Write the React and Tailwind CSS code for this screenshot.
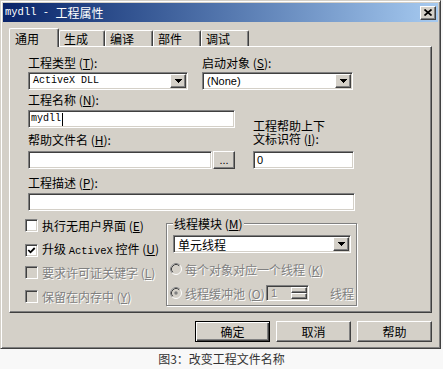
import React from "react";

const SUNKEN =
  "border border-t-[#808080] border-l-[#808080] border-b-white border-r-white shadow-[inset_1px_1px_0_#404040,inset_-1px_-1px_0_#d4d0c8]";
const RAISED =
  "border border-t-white border-l-white border-b-[#404040] border-r-[#404040] shadow-[inset_-1px_-1px_0_#808080]";
const DIS = "text-[#808080] [text-shadow:1px_1px_0_#ffffff]";
const MONO = "[font-family:'Liberation_Mono','Noto_Sans_CJK_SC',monospace]";
const SANS = "[font-family:'Liberation_Sans','Noto_Sans_CJK_SC',sans-serif]";

function Acc({ k }) {
  return (
    <>
      {" "}(<span className="underline underline-offset-[1px]">{k}</span>)
    </>
  );
}

function Arrow({ color = "#000" }) {
  return (
    <svg width="7" height="4" viewBox="0 0 7 4" shapeRendering="crispEdges">
      <rect x="0" y="0" width="7" height="1" fill={color} />
      <rect x="1" y="1" width="5" height="1" fill={color} />
      <rect x="2" y="2" width="3" height="1" fill={color} />
      <rect x="3" y="3" width="1" height="1" fill={color} />
    </svg>
  );
}

function DropBtn() {
  return (
    <div className={`${RAISED} bg-[#d4d0c8] w-[16px] h-full flex items-center justify-center shrink-0`}>
      <Arrow />
    </div>
  );
}

function Check({ checked, disabled }) {
  return (
    <div
      className={`${SUNKEN} w-[13px] h-[13px] shrink-0 p-[1px] flex items-center justify-center ${
        disabled ? "bg-[#d4d0c8]" : "bg-white"
      }`}
    >
      {checked && (
        <svg width="9" height="9" viewBox="0 0 9 9">
          <path d="M1.3 4 L3.5 6.3 L7.7 2" fill="none" stroke="#000" strokeWidth="1.8" />
        </svg>
      )}
    </div>
  );
}

function Radio({ checked }) {
  return (
    <svg width="12" height="12" viewBox="0 0 12 12" className="shrink-0">
      <circle cx="6" cy="6" r="5.5" fill="#d4d0c8" stroke="#ffffff" strokeWidth="1" />
      <path d="M2.11 9.89 A5.5 5.5 0 0 1 9.89 2.11" fill="none" stroke="#808080" strokeWidth="1" />
      <path d="M2.82 9.18 A4.5 4.5 0 0 1 9.18 2.82" fill="none" stroke="#404040" strokeWidth="1" />
      {checked && <circle cx="6" cy="6" r="1.7" fill="#808080" />}
    </svg>
  );
}

function Label({ children, className = "" }) {
  return <div className={`h-[13px] leading-[13px] whitespace-nowrap ${className}`}>{children}</div>;
}

export default function App() {
  return (
    <div className="w-[443px] h-[369px] bg-[#f8f8f8] overflow-hidden text-[12px] text-black [font-family:'Noto_Sans_CJK_SC','Liberation_Sans',sans-serif]">
      <div className="w-[441px] h-[349px] bg-[#d4d0c8] border border-t-[#d4d0c8] border-l-[#d4d0c8] border-b-[#404040] border-r-[#404040] shadow-[inset_1px_1px_0_#ffffff,inset_-1px_-1px_0_#808080] p-[2px] flex flex-col">
        {/* title bar */}
        <div className="h-[19px] shrink-0 flex items-center bg-linear-to-r from-[#0a246a] to-[#a6caf0] pl-[2px] pr-[2px]">
          <span className={`text-white text-[10.5px] ${MONO} whitespace-pre`}>mydll - </span>
          <span className="text-white text-[12px] leading-[14px]">工程属性</span>
          <div className={`${RAISED} ml-auto w-[16px] h-[14px] bg-[#d4d0c8] flex items-center justify-center`}>
            <svg width="8" height="7" viewBox="0 0 8 7">
              <path d="M0.5 0.5 L7.5 6.5 M7.5 0.5 L0.5 6.5" stroke="#000" strokeWidth="1.7" />
            </svg>
          </div>
        </div>

        {/* tabs */}
        <div className="mt-[6px] ml-[6px] h-[18px] shrink-0 flex items-start relative z-10">
          <div className="w-[50px] h-[19px] bg-[#d4d0c8] border-l border-t border-r border-l-white border-t-white border-r-[#404040] shadow-[inset_-1px_0_0_#808080] rounded-t-[2px] pl-[5px] pt-[3px] leading-[13px]">
            通用
          </div>
          {[
            ["生成", "w-[46px]"],
            ["编译", "w-[48px]"],
            ["部件", "w-[48px]"],
            ["调试", "w-[48px]"],
          ].map(([t, w]) => (
            <div
              key={t}
              className={`${w} h-[16px] mt-[2px] bg-[#d4d0c8] border-l border-t border-r border-l-white border-t-white border-r-[#404040] shadow-[inset_-1px_0_0_#808080] rounded-t-[2px] pl-[4px] pt-[1px] leading-[13px]`}
            >
              {t}
            </div>
          ))}
        </div>

        {/* panel */}
        <div className="ml-[6px] w-[423px] h-[267px] shrink-0 border border-t-white border-l-white border-b-[#404040] border-r-[#404040] shadow-[inset_-1px_-1px_0_#808080] pt-[9px] pl-[18px]">
          {/* row 1 */}
          <div className="flex">
            <div className="w-[174px]">
              <Label>
                工程类型<Acc k="T" />:
              </Label>
              <div className={`${SUNKEN} mt-[3px] w-[160px] h-[18px] bg-white p-[1px] flex items-center`}>
                <div className={`flex-1 pl-[3px] text-[10px] ${MONO} leading-[12px]`}>ActiveX DLL</div>
                <DropBtn />
              </div>
            </div>
            <div>
              <Label>
                启动对象<Acc k="S" />:
              </Label>
              <div className={`${SUNKEN} mt-[3px] w-[151px] h-[18px] bg-white p-[1px] flex items-center`}>
                <div className={`flex-1 pl-[3px] text-[11px] ${SANS} leading-[12px]`}>(None)</div>
                <DropBtn />
              </div>
            </div>
          </div>

          {/* row 2 */}
          <div className="flex mt-[3px]">
            <div className="w-[207px]">
              <Label>
                工程名称<Acc k="N" />:
              </Label>
              <div className={`${SUNKEN} mt-[4px] h-[18px] bg-white pl-[2px] flex items-center`}>
                <span className={`text-[10px] ${MONO} leading-[12px]`}>mydll</span>
                <span className="ml-[1px] w-[1px] h-[13px] bg-black" />
              </div>
              <Label className="mt-[5px]">
                帮助文件名<Acc k="H" />:
              </Label>
              <div className="mt-[5px] flex gap-[1px]">
                <div className={`${SUNKEN} w-[184px] h-[18px] bg-white`} />
                <div className={`${RAISED} w-[22px] h-[18px] bg-[#d4d0c8] flex items-end justify-center pb-[2px] ${SANS} text-[11px] leading-[11px]`}>
                  ...
                </div>
              </div>
            </div>
            <div className="ml-[18px] pt-[26px]">
              <Label>工程帮助上下</Label>
              <Label>
                文标识符<Acc k="I" />:
              </Label>
              <div className={`${SUNKEN} mt-[6px] w-[101px] h-[18px] bg-white pl-[3px] flex items-center ${SANS} text-[11px]`}>
                0
              </div>
            </div>
          </div>

          {/* row 3 */}
          <Label className="mt-[7px]">
            工程描述<Acc k="P" />:
          </Label>
          <div className={`${SUNKEN} mt-[4px] w-[327px] h-[18px] bg-white`} />

          {/* row 4 */}
          <div className="flex items-start">
            <div className="ml-[-3px] w-[141px]">
              <div className="mt-[7px] h-[14px] flex items-center gap-[4px]">
                <Check />
                <span className="whitespace-nowrap leading-[13px]">
                  执行无用户界面<Acc k="E" />
                </span>
              </div>
              <div className="mt-[11px] h-[14px] flex items-center gap-[4px]">
                <Check checked />
                <span className="whitespace-nowrap leading-[13px]">
                  升级 <span className={`${MONO} text-[10.5px]`}>ActiveX</span> 控件<Acc k="U" />
                </span>
              </div>
              <div className="mt-[8px] h-[14px] flex items-center gap-[4px]">
                <Check disabled />
                <span className={`whitespace-nowrap leading-[13px] ${DIS}`}>
                  要求许可证关键字<Acc k="L" />
                </span>
              </div>
              <div className="mt-[10px] h-[14px] flex items-center gap-[4px]">
                <Check disabled />
                <span className={`whitespace-nowrap leading-[13px] ${DIS}`}>
                  保留在内存中<Acc k="Y" />
                </span>
              </div>
            </div>

            <div className="relative mt-[12px] w-[191px] h-[83px] border border-[#808080] shadow-[inset_1px_1px_0_#ffffff,1px_1px_0_#ffffff]">
              <div className="absolute top-[-7px] left-[6px] px-[1px] bg-[#d4d0c8] leading-[13px] whitespace-nowrap">
                线程模块<Acc k="M" />
              </div>
              <div className={`${SUNKEN} mt-[11px] ml-[6px] w-[178px] h-[18px] bg-white p-[1px] flex items-center`}>
                <div className="flex-1 pl-[3px] leading-[13px]">单元线程</div>
                <DropBtn />
              </div>
              <div className="mt-[9px] ml-[3px] h-[14px] flex items-center gap-[3px]">
                <Radio />
                <span className={`whitespace-nowrap leading-[13px] ${DIS}`}>
                  每个对象对应一个线程<Acc k="K" />
                </span>
              </div>
              <div className="mt-[9px] ml-[3px] h-[16px] flex items-center gap-[3px]">
                <Radio checked />
                <span className={`w-[78px] whitespace-nowrap leading-[13px] ${DIS}`}>
                  线程缓冲池<Acc k="O" />
                </span>
                <div className={`${SUNKEN} w-[43px] h-[16px] bg-[#d4d0c8] p-[1px] flex items-center`}>
                  <span className={`flex-1 pl-[3px] ${SANS} text-[11px] leading-[12px] ${DIS}`}>1</span>
                  <div className="w-[16px] h-full flex flex-col">
                    <div className={`${RAISED} flex-1 bg-[#d4d0c8]`} />
                    <div className={`${RAISED} flex-1 bg-[#d4d0c8]`} />
                  </div>
                </div>
                <span className={`ml-[18px] whitespace-nowrap leading-[13px] ${DIS}`}>线程</span>
              </div>
            </div>
          </div>
        </div>

        {/* buttons */}
        <div className="mt-[8px] pr-[6px] flex justify-end gap-[6px]">
          <div className="w-[75px] h-[21px] bg-[#d4d0c8] border border-black shadow-[inset_1px_1px_0_#ffffff,inset_-1px_-1px_0_#404040,inset_-2px_-2px_0_#808080] flex items-center justify-center leading-[13px]">
            确定
          </div>
          <div className={`${RAISED} w-[75px] h-[21px] bg-[#d4d0c8] flex items-center justify-center leading-[13px]`}>
            取消
          </div>
          <div className={`${RAISED} w-[75px] h-[21px] bg-[#d4d0c8] flex items-center justify-center leading-[13px]`}>
            帮助
          </div>
        </div>
      </div>

      {/* caption */}
      <div className="mt-[3px] flex justify-center leading-[14px] text-[#333333]">图3：改变工程文件名称</div>
    </div>
  );
}
